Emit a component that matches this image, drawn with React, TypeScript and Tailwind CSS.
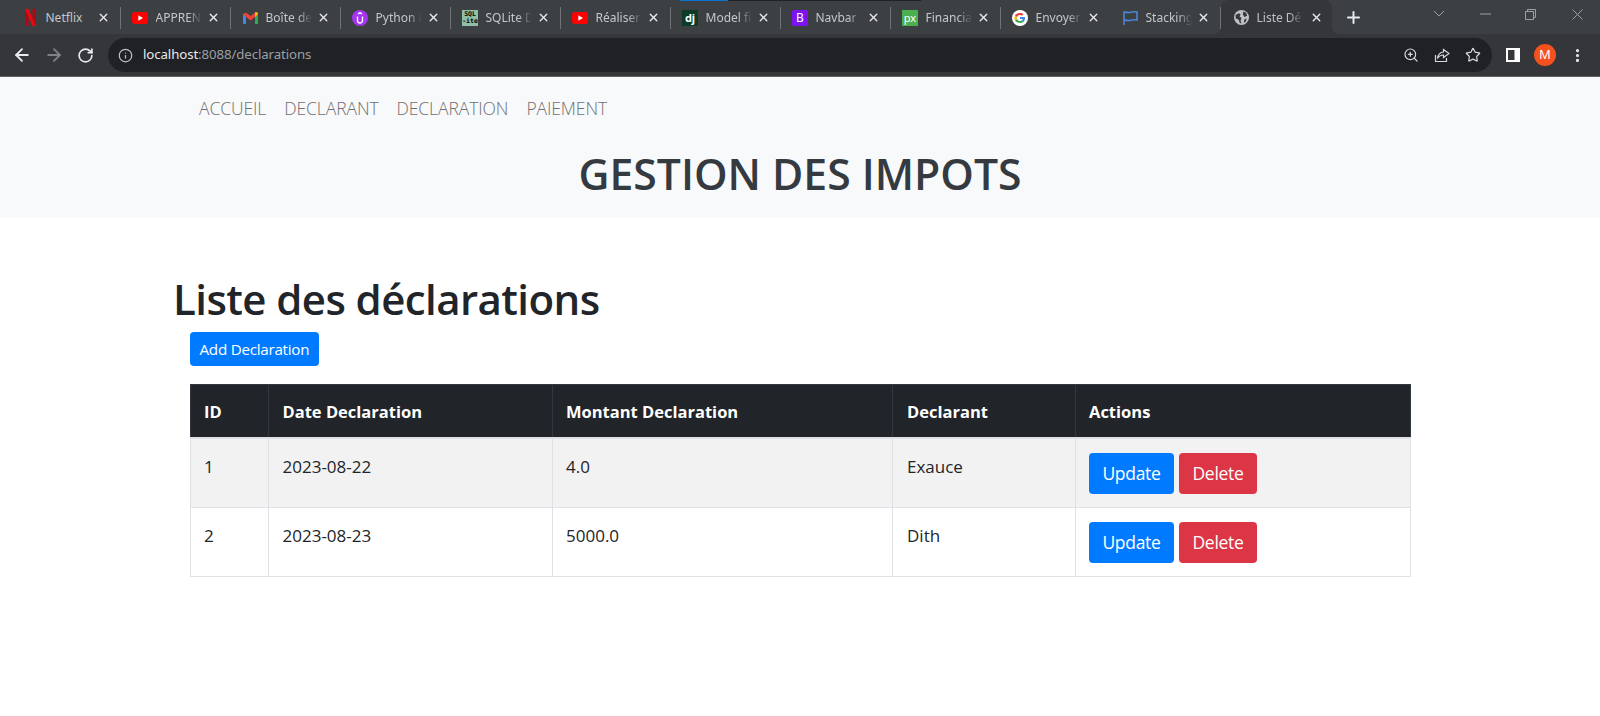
import { ArrowLeft, ArrowRight, Info, MoreVertical, Plus, RotateCw, Star, X, ZoomIn } from "lucide-react";
import type { ReactNode } from "react";

const tabs: { title: string; icon: ReactNode; fade?: boolean }[] = [
  { title: "Netflix", icon: <NetflixIcon />, fade: false },
  { title: "APPRENDRE", icon: <YoutubeIcon /> },
  { title: "Boîte de réception", icon: <GmailIcon /> },
  { title: "Python & SQL", icon: <PythonIcon /> },
  { title: "SQLite Data", icon: <SqliteIcon /> },
  { title: "Réaliser un", icon: <YoutubeIcon /> },
  { title: "Model field", icon: <DjangoIcon /> },
  { title: "Navbar - Boot", icon: <BootstrapIcon /> },
  { title: "Financial data", icon: <PxIcon /> },
  { title: "Envoyer un", icon: <GoogleIcon /> },
  { title: "Stacking flow", icon: <FlagIcon /> },
];

const rows = [
  { id: 1, date: "2023-08-22", amount: "4.0", declarant: "Exauce" },
  { id: 2, date: "2023-08-23", amount: "5000.0", declarant: "Dith" },
];

export default function App() {
  return (
    <div className="min-h-[716px] bg-white font-['Open_Sans',sans-serif] text-[#212529]">
      <BrowserChrome />

      {/* Navbar */}
      <header className="h-[141px] bg-[#f8f9fa]">
        <nav className="flex gap-[18px] pl-[199px] pt-[18px] text-[17.5px] font-light leading-[26px] tracking-[-0.09px] text-[#6f7071]">
          <a href="#">ACCUEIL</a>
          <a href="#">DECLARANT</a>
          <a href="#">DECLARATION</a>
          <a href="#">PAIEMENT</a>
        </nav>
        <h1 className="mt-[23px] text-center text-[42.7px] font-semibold leading-[60px] text-[#343a40]">
          GESTION DES IMPOTS
        </h1>
      </header>

      {/* Content */}
      <main className="mx-auto w-[1250px] pt-[51px]">
        <h2 className="-ml-[2px] text-[42px] font-semibold leading-[60px] tracking-[-0.58px]">Liste des déclarations</h2>
        <div className="px-[15px]">
          <button className="mt-[3px] h-[34px] rounded bg-[#007bff] px-[9.5px] text-[15.2px] tracking-[-0.25px] text-white">
            Add Declaration
          </button>
          <table className="mt-[18px] w-[1221px] table-fixed border-collapse text-[17px]">
            <thead>
              <tr className="h-[53px] bg-[#212529] text-left text-[16.5px] text-white">
                <th className="w-[77.5px] border border-[#32383e] border-b-[2px] border-b-[#dee2e6] pl-[13px] pt-[3px] font-bold">ID</th>
                <th className="w-[284.5px] border border-[#32383e] border-b-[2px] border-b-[#dee2e6] pl-[14px] pt-[3px] font-bold">Date Declaration</th>
                <th className="w-[340px] border border-[#32383e] border-b-[2px] border-b-[#dee2e6] pl-[13px] pt-[3px] font-bold">Montant Declaration</th>
                <th className="w-[183px] border border-[#32383e] border-b-[2px] border-b-[#dee2e6] pl-[14px] pt-[3px] font-bold">Declarant</th>
                <th className="border border-[#32383e] border-b-[2px] border-b-[#dee2e6] pl-[13px] pt-[3px] font-bold">Actions</th>
              </tr>
            </thead>
            <tbody>
              {rows.map((row) => (
                <tr key={row.id} className={row.id === 1 ? "h-[70px] bg-[#f2f2f2]" : "h-[69px] bg-white"}>
                  <td className="border border-[#dee2e6] px-[13px] pt-[16px] align-top leading-[24px]">{row.id}</td>
                  <td className="border border-[#dee2e6] px-[14px] pt-[16px] align-top leading-[24px]">{row.date}</td>
                  <td className="border border-[#dee2e6] px-[13px] pt-[16px] align-top leading-[24px]">{row.amount}</td>
                  <td className="border border-[#dee2e6] px-[14px] pt-[16px] align-top leading-[24px]">{row.declarant}</td>
                  <td className="border border-[#dee2e6] px-[13px] pt-[1px] align-middle">
                    <div className="flex gap-[5px]">
                      <button className="h-[41px] w-[85px] rounded bg-[#007bff] text-[17.5px] tracking-[-0.3px] text-white">Update</button>
                      <button className="h-[41px] w-[78px] rounded bg-[#dc3545] text-[17.5px] tracking-[-0.3px] text-white">Delete</button>
                    </div>
                  </td>
                </tr>
              ))}
            </tbody>
          </table>
        </div>
      </main>
    </div>
  );
}

function BrowserChrome() {
  return (
    <div className="font-['Noto_Sans',sans-serif]">
      {/* Tab strip */}
      <div className="relative flex h-[34px] items-center bg-[#3c4043] pl-[10.5px]">
        <div className="absolute left-[680px] top-0 h-px w-[241px] bg-[#202124]">
          <div className="h-px w-[48px] bg-[#0b74d1]" />
        </div>
        {tabs.map((tab, i) => (
          <Tab key={i} title={tab.title} icon={tab.icon} fade={tab.fade ?? true} />
        ))}
        <div className="relative flex h-[34px] w-[111px] items-center rounded-t-lg bg-[#35363a] pl-[13px] pt-[1px] text-[12px] text-[#bdc1c6]">
          <span className="absolute bottom-0 left-[-8px] h-2 w-2 bg-[radial-gradient(circle_at_0_0,transparent_8px,#35363a_8px)]" />
          <span className="absolute bottom-0 right-[-8px] h-2 w-2 bg-[radial-gradient(circle_at_100%_0,transparent_8px,#35363a_8px)]" />
          <GlobeIcon />
          <span className="ml-[8px] w-[46px] overflow-hidden whitespace-nowrap [mask-image:linear-gradient(to_right,black_70%,transparent)]">Liste Déclarations</span>
          <X size={13} strokeWidth={2.5} className="ml-[7px] text-[#e8eaed]" />
        </div>
        <Plus size={19} strokeWidth={2.5} className="ml-[12px] mt-[1px] text-[#e8eaed]" />
        <WindowControls />
      </div>

      {/* Toolbar */}
      <div className="flex h-[43px] items-center border-b border-[#5f6368] bg-[#35363a]">
        <ArrowLeft size={20} strokeWidth={2.2} className="ml-[12px] text-[#e8eaed]" />
        <ArrowRight size={20} strokeWidth={2.2} className="ml-[12px] text-[#7f8285]" />
        <RotateCw size={17} strokeWidth={2.4} className="ml-[13px] text-[#e8eaed]" />
        <div className="ml-[14px] flex h-[34px] w-[1384px] items-center rounded-full bg-[#202124] pl-[10px] pr-[11px]">
          <Info size={15} className="text-[#bdc1c6]" />
          <span className="ml-[10px] text-[13.25px] tracking-[-0.1px] text-[#e8eaed]">
            localhost<span className="text-[#9aa0a6]">:8088/declarations</span>
          </span>
          <div className="ml-auto flex items-center gap-[15px] text-[#d5d8dc]">
            <ZoomIn size={16} strokeWidth={1.8} />
            <ShareIcon />
            <Star size={16} strokeWidth={1.8} />
          </div>
        </div>
        <PanelIcon />
        <div className="ml-[14px] flex h-[22px] w-[22px] items-center justify-center rounded-full bg-[#f4511e] text-[13px] text-white">M</div>
        <MoreVertical size={17} strokeWidth={2.5} className="ml-[13px] text-[#e8eaed]" />
      </div>
    </div>
  );
}

function Tab({ title, icon, fade }: { title: string; icon: ReactNode; fade: boolean }) {
  return (
    <div className="mt-[1px] flex h-[22px] w-[110px] items-center pl-[11.5px] text-[12px] text-[#c4c7cb] [&:not(:nth-child(11))]:border-r [&:not(:nth-child(11))]:border-[#6f7377]">
      <span className="flex h-4 w-4 shrink-0 items-center justify-center">{icon}</span>
      <span className={`ml-[7.5px] w-[46px] overflow-hidden whitespace-nowrap ${fade ? "[mask-image:linear-gradient(to_right,black_70%,transparent)]" : ""}`}>
        {title}
      </span>
      <X size={13} strokeWidth={2.5} className="ml-[5px] shrink-0 text-[#e8eaed]" />
    </div>
  );
}

function WindowControls() {
  return (
    <div className="ml-auto flex items-center pb-[6px] text-[#9aa0a6]">
      <svg width="12" height="8" viewBox="0 0 12 8" fill="none" stroke="currentColor"><path d="M1 1l5 5 5-5" /></svg>
      <svg className="ml-[35px]" width="11" height="2" viewBox="0 0 11 2" stroke="currentColor"><path d="M0 1h11" /></svg>
      <svg className="ml-[34px]" width="11" height="11" viewBox="0 0 11 11" fill="none" stroke="currentColor"><path d="M.5 2.500h8v8h-8zM2.500 2.500v-2h8v8h-2" /></svg>
      <svg className="ml-[36px] mr-[17px]" width="11" height="11" viewBox="0 0 11 11" fill="none" stroke="currentColor"><path d="M.5.5l10 10M10.500.5l-10 10" /></svg>
    </div>
  );
}

function PanelIcon() {
  return (
    <svg className="ml-[14px]" width="14" height="14" viewBox="0 0 14 14">
      <path fill="#fff" d="M0 0h14v14H0z" />
      <path fill="#35363a" d="M2 2h6.500v10H2z" />
    </svg>
  );
}

function ShareIcon() {
  return (
    <svg width="16" height="16" viewBox="0 0 16 16" fill="none" stroke="currentColor" strokeWidth="1.2">
      <path d="M1.500 8v6.500h11V11" />
      <path d="M9.500 2.500l5.500 4-5.500 4V8C7 8 5 9 3.500 11.500 4 8 6 5.200 9.500 5z" />
    </svg>
  );
}

function GlobeIcon() {
  return (
    <svg width="15" height="15" viewBox="0 0 16 16" className="shrink-0">
      <circle cx="8" cy="8" r="8" fill="#bdc1c6" />
      <path fill="#35363a" d="M1.500 5.500L5 3.500l2 1-1 2.500 2 1.500-1 3 1 3-2-1-1-3-3-1.500zM10 1.500l3 1.500 1 3-3 1.500L9.500 4.500zM11 10l2.500-1-1 3.500-2 1z" />
    </svg>
  );
}

function NetflixIcon() {
  return (
    <svg width="11" height="17" viewBox="0 0 11 17">
      <path fill="#b20710" d="M0 0h3.500v17L0 17.500zM7.500 0H11v17.500L7.500 17z" />
      <path fill="#e50914" d="M0 0h3.500L11 17.500 7.500 17z" />
    </svg>
  );
}

function YoutubeIcon() {
  return (
    <svg width="16" height="12" viewBox="0 0 16 12">
      <rect width="16" height="12" rx="3" fill="#ff0000" />
      <path fill="#fff" d="M6.300 3.300v5.400L11 6z" />
    </svg>
  );
}

function GmailIcon() {
  return (
    <svg width="15" height="12" viewBox="0 0 15 12">
      <path fill="#4285f4" d="M0 2h3v10H1a1 1 0 0 1-1-1z" />
      <path fill="#34a853" d="M12 2h3v9a1 1 0 0 1-1 1h-2z" />
      <path fill="#ea4335" d="M0 2l3-1.500L7.500 4 12 .5 15 2l-3 3-4.500 3.500L3 5z" />
      <path fill="#fbbc04" d="M12 .5C13.500-.5 15 .5 15 2l-3 3z" />
    </svg>
  );
}

function PythonIcon() {
  return (
    <svg width="16" height="16" viewBox="0 0 16 16">
      <circle cx="8" cy="8" r="8" fill="#a435f0" />
      <path fill="none" stroke="#fff" strokeWidth="1.300" d="M5.500 6.500v4a2.500 2.500 0 0 0 5 0v-4" />
      <path stroke="#fff" strokeWidth="1.500" d="M6 3.800l2-1 2 1" fill="none" />
    </svg>
  );
}

function SqliteIcon() {
  return (
    <span className="flex h-4 w-4 flex-col items-center justify-center bg-[#8fbfa8] font-['DejaVu_Sans_Mono',monospace] text-[6.5px] font-bold leading-[7px] text-black">
      <span>SQL</span>
      <span>-ite</span>
    </span>
  );
}

function DjangoIcon() {
  return (
    <span className="flex h-4 w-4 items-center justify-center bg-[#0c3c26] text-[11px] font-bold leading-none text-white">dj</span>
  );
}

function BootstrapIcon() {
  return (
    <span className="flex h-4 w-4 items-center justify-center rounded-[2px] bg-[#7f12f0] text-[12px] leading-none text-white">B</span>
  );
}

function PxIcon() {
  return (
    <span className="flex h-4 w-4 items-center justify-center bg-[#4caf50] text-[11px] leading-none text-white">px</span>
  );
}

function GoogleIcon() {
  return (
    <svg width="16" height="16" viewBox="0 0 16 16">
      <circle cx="8" cy="8" r="8" fill="#fff" />
      <path fill="#4285f4" d="M13 8.200c0-.4 0-.7-.1-1.100H8v2h2.800c-.1.600-.5 1.200-1 1.500l1.600 1.300C12.400 11 13 9.700 13 8.200z" />
      <path fill="#34a853" d="M8 13c1.400 0 2.500-.4 3.400-1.100l-1.600-1.300c-.5.300-1 .5-1.800.5-1.300 0-2.500-.9-2.900-2.100L3 10.300C3.800 11.900 5.800 13 8 13z" />
      <path fill="#fbbc04" d="M5.100 9c-.2-.6-.2-1.300 0-2L3 5.700c-.7 1.400-.7 3.200 0 4.600z" />
      <path fill="#ea4335" d="M8 5c.8 0 1.500.3 2 .8l1.500-1.500C10.600 3.500 9.400 3 8 3 5.800 3 3.800 4.100 3 5.700L5.100 7C5.500 5.900 6.700 5 8 5z" />
    </svg>
  );
}

function FlagIcon() {
  return (
    <svg width="15" height="14" viewBox="0 0 15 14" fill="none" stroke="#4a86d8" strokeWidth="1.600">
      <path d="M1 14V1h1.500c3 2 6-1 11.500 0v8c-5.500-1-8.500 2-11.500 0H1" />
    </svg>
  );
}
